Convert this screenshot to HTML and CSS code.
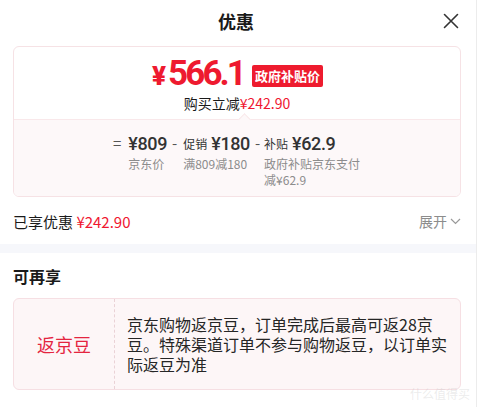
FILE: index.html
```html
<!DOCTYPE html>
<html lang="zh-CN">
<head>
<meta charset="utf-8">
<title>优惠</title>
<link rel="stylesheet" href="styles.css">
</head>
<body>
<div class="panel">
  <div class="header">
    <h1 class="title">优惠</h1>
    <span class="close" aria-label="关闭">
      <svg width="16" height="16" viewBox="0 0 16 16"><path d="M1.5 1.5 L14.5 14.5 M14.5 1.5 L1.5 14.5" stroke="#333" stroke-width="1.6" fill="none" stroke-linecap="round"/></svg>
    </span>
  </div>
  <div class="section">
    <div class="card">
      <div class="card-top">
        <div class="price-row">
          <span class="price"><span class="yen">¥</span><span class="num">566.1</span></span>
          <span class="badge">政府补贴价</span>
        </div>
        <div class="reduce">购买立减<span class="red">¥242.90</span></div>
      </div>
      <div class="card-bottom">
        <div class="formula">
          <div class="col">
            <span class="op op-eq">=</span>
            <div class="body">
              <div class="val"><span class="amt">¥809</span></div>
              <div class="cap">京东价</div>
            </div>
          </div>
          <div class="col">
            <span class="op">-</span>
            <div class="body">
              <div class="val"><span class="lbl">促销</span><span class="amt">¥180</span></div>
              <div class="cap">满809减180</div>
            </div>
          </div>
          <div class="col">
            <span class="op">-</span>
            <div class="body">
              <div class="val"><span class="lbl">补贴</span><span class="amt">¥62.9</span></div>
              <div class="cap">政府补贴京东支付<br>减¥62.9</div>
            </div>
          </div>
        </div>
      </div>
    </div>
    <div class="enjoyed">
      <div class="enjoyed-left">已享优惠 <span class="red">¥242.90</span></div>
      <div class="expand">展开
        <svg width="11" height="7" viewBox="0 0 11 7"><path d="M1 1 L5.5 5.5 L10 1" stroke="#999" stroke-width="1.2" fill="none"/></svg>
      </div>
    </div>
  </div>
  <div class="band"></div>
  <div class="section">
    <h2 class="sub-title">可再享</h2>
    <div class="bean-card">
      <div class="bean-left">返京豆</div>
      <div class="bean-right">京东购物返京豆，订单完成后最高可返28京豆。特殊渠道订单不参与购物返豆，以订单实际返豆为准</div>
    </div>
  </div>
  <div class="watermark">什么值得买</div>
</div>
</body>
</html>
```
FILE: styles.css
```css
* { box-sizing: border-box; }
html, body { margin: 0; padding: 0; background: #fff; }
body {
  font-family: "Noto Sans CJK SC", "Noto Sans", sans-serif;
  color: #1a1a1a;
  width: 480px;
  height: 407px;
  overflow: hidden;
}
.panel {
  position: relative;
  width: 477px;
  height: 407px;
  border-right: 1px solid #ececec;
}
.header {
  position: relative;
  height: 42px;
  display: flex;
  align-items: center;
  justify-content: center;
}
.title {
  margin: 0 0 0 -4px;
  font-size: 18px;
  font-weight: 700;
  line-height: 42px;
  color: #1a1a1a;
}
.close {
  position: absolute;
  right: 17px;
  top: 13px;
  width: 16px;
  height: 16px;
  display: block;
}
.close svg { display: block; }
.section {
  padding: 0 15px 0 13px;
}
.card {
  margin-top: 4px;
  border: 1px solid #f6e2e5;
  border-radius: 6px;
  overflow: hidden;
}
.card-top {
  height: 72px;
  display: flex;
  flex-direction: column;
  align-items: center;
  padding-top: 9px;
}
.price-row {
  display: flex;
  align-items: center;
  height: 36px;
  margin-left: 1px;
}
.price {
  color: #ee1a2f;
  font-family: "Roboto", "Noto Sans", sans-serif;
  font-weight: 700;
  display: flex;
  align-items: baseline;
}
.yen { font-size: 26px; font-weight: 900; margin-right: 2px; }
.num { font-size: 35px; letter-spacing: -2.9px; line-height: 36px; }
.badge {
  margin-left: 8px;
  background: #ee1b2e;
  color: #fff;
  font-size: 13px;
  font-weight: 700;
  line-height: 22px;
  height: 22px;
  padding: 0 3px;
  border-radius: 2px;
  margin-top: 4px;
}
.reduce {
  font-size: 14px;
  line-height: 20px;
  margin-top: 1px;
  color: #1a1a1a;
}
.red { color: #ef1630; }
.card-bottom {
  position: relative;
  height: 77px;
  background: #fdf8f9;
  border-top: 1px solid #f9e8ea;
  padding-top: 12px;
}
.card-bottom::before {
  content: "";
  position: absolute;
  top: -5px;
  left: 226px;
  width: 8px;
  height: 8px;
  background: #fdf8f9;
  border-left: 1px solid #f9e8ea;
  border-top: 1px solid #f9e8ea;
  transform: rotate(45deg);
}
.formula {
  display: flex;
  justify-content: flex-start;
  padding-left: 99px;
}
.col { display: flex; align-items: flex-start; }
.op {
  font-size: 15px;
  line-height: 22px;
  color: #555;
  margin: 0 6px 0 5px;
}
.op-eq { margin: 0 7px 0 0; }
.col:nth-child(3) .op { margin-left: 5px; margin-right: 4px; }
.body { display: flex; flex-direction: column; }
.val {
  display: flex;
  align-items: center;
  height: 22px;
  color: #333;
}
.lbl { font-size: 12px; color: #333; margin-right: 4px; }
.amt {
  font-family: "Roboto", "Noto Sans", sans-serif;
  font-size: 18px;
  font-weight: 500;
  letter-spacing: -0.4px;
  color: #333;
}
.cap {
  font-size: 12px;
  line-height: 16px;
  color: #8c8c8c;
  margin-top: 2px;
}
.enjoyed {
  display: flex;
  justify-content: space-between;
  align-items: center;
  height: 48px;
}
.enjoyed-left { font-size: 15px; color: #1a1a1a; }
.expand {
  font-size: 14px;
  color: #8c8c8c;
  display: flex;
  align-items: center;
  gap: 3px;
}
.band {
  height: 9px;
  background: #f6f7fb;
  margin-top: -1px;
}
.sub-title {
  margin: 0;
  font-size: 16px;
  font-weight: 700;
  line-height: 20px;
  padding-top: 13px;
  height: 45px;
}
.bean-card {
  display: flex;
  height: 92px;
  background: #fdf6f7;
  border: 1px solid #f6dfe3;
  border-radius: 6px;
}
.bean-left {
  width: 101px;
  display: flex;
  align-items: center;
  justify-content: center;
  color: #e4253f;
  font-size: 18px;
  border-right: 1px dashed #ead2d6;
}
.bean-right {
  flex: 1;
  padding: 15px 9px 0 12px;
  font-size: 16px;
  line-height: 20px;
  color: #262626;
}
.watermark {
  position: absolute;
  right: 6px;
  bottom: 5px;
  font-size: 12px;
  color: rgba(200, 200, 200, 0.35);
}
```
